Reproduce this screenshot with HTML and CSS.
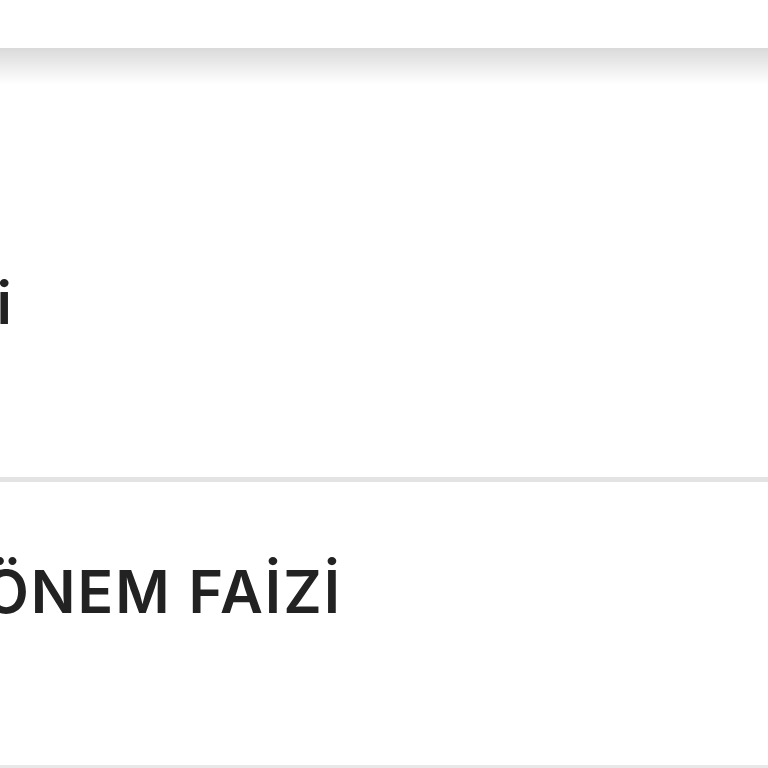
FILE: index.html
```html
<!DOCTYPE html>
<html lang="tr">
<head>
<meta charset="utf-8">
<link rel="stylesheet" href="styles.css">
</head>
<body>
<div class="top"></div>
<div class="shade"></div>
<div class="row row-a">
  <div class="label label-a">Faiz Bilgisi</div>
</div>
<div class="row row-b">
  <div class="label label-b">ARA DÖNEM FAİZİ</div>
</div>
</body>
</html>
```
FILE: styles.css
```css
html, body {
  margin: 0;
  padding: 0;
  background: #fff;
  overflow: hidden;
  width: 768px;
  height: 768px;
}
.top {
  height: 50px;
  border-bottom: 2px solid #dadada;
  box-sizing: border-box;
  background: #fff;
}
.shade {
  height: 35px;
  background: linear-gradient(#dcdcdc, #fafafa 85%, #fff);
}
.row {
  display: flex;
  box-sizing: border-box;
}
.label {
  font-family: Inter, "Noto Sans", sans-serif;
  font-weight: 600;
  font-size: 59px;
  line-height: 60px;
  color: #222;
  white-space: nowrap;
  text-align: right;
  flex: none;
  width: 800px;
  letter-spacing: 2px;
}
.row-a {
  height: 397px;
  padding-top: 188px;
  border-bottom: 5px solid #e3e3e3;
}
.label-a {
  margin-left: -786px;
}
.row-b {
  height: 286px;
  padding-top: 80px;
  border-bottom: 3px solid #e8e8e8;
}
.label-b {
  margin-left: -458px;
}
```
